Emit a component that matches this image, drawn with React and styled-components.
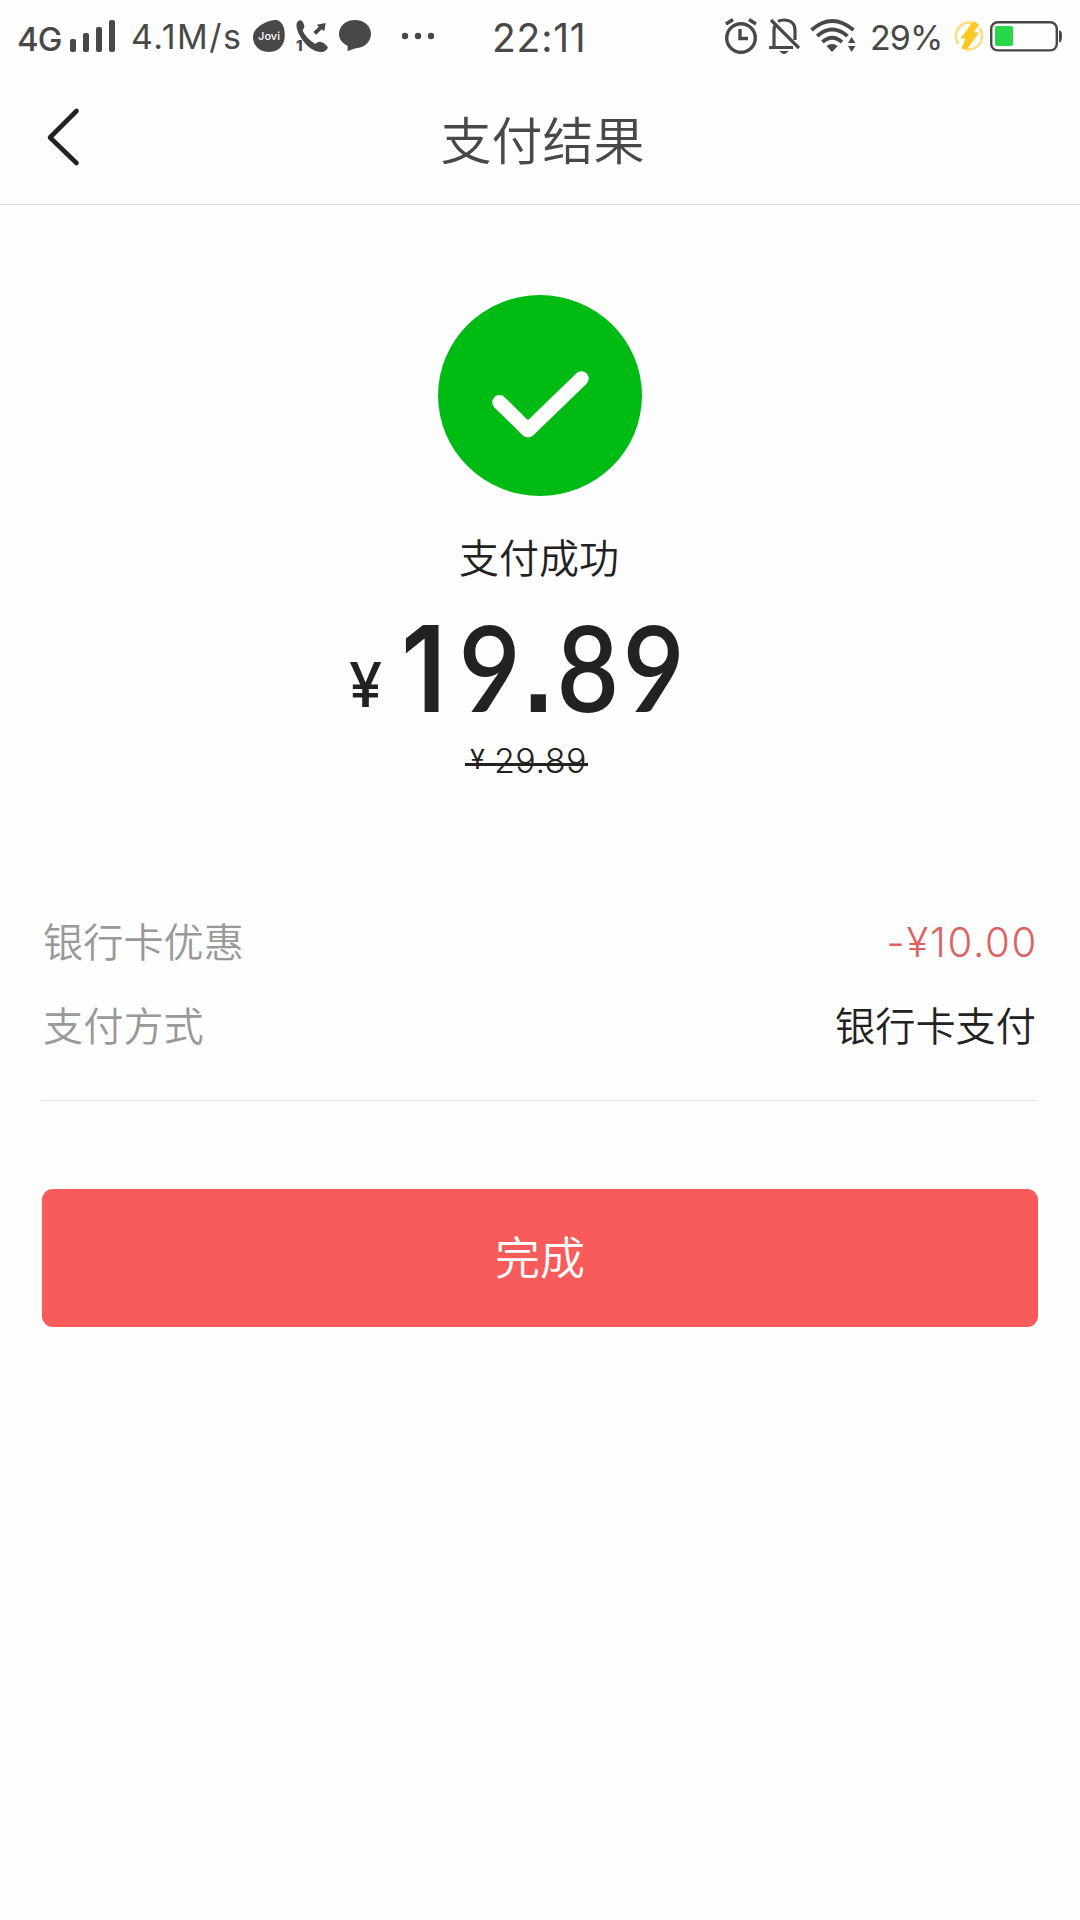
import React from 'react';
import styled, { createGlobalStyle } from 'styled-components';

const details = [
  { label: '银行卡优惠', value: '-¥10.00', discount: true },
  { label: '支付方式', value: '银行卡支付' },
];

const digitFonts = { 1: 'Inter', '.': "'Liberation Sans'" };

function App() {
  return (
    <Screen>
      <GlobalStyle />
      <StatusBar>
        <Network>4G</Network>
        <Signal viewBox="0 0 46 32">
          <rect x="0" y="19" width="6" height="13" rx="2" />
          <rect x="13" y="13" width="6" height="19" rx="2" />
          <rect x="26" y="7" width="6" height="25" rx="2" />
          <rect x="39" y="0" width="6" height="32" rx="2" />
        </Signal>
        <Speed>4.1M/s</Speed>
        <Jovi>
          <svg viewBox="0 0 32 32">
            <path d="M21 0C26 -.6 30 3 31.300 10C33 20 30 31.600 16 32C6 32 0 25 0 17C0 9 10 1.500 21 0Z" />
          </svg>
          <span>Jovi</span>
        </Jovi>
        <MissedCall>
          <svg viewBox="0 0 32 32">
            <path d="M1.200 2.200C2.500 .5 4.500 -.2 5.700 .8C7.700 3 8.700 5.500 8.300 7.200C7.700 9 6.300 9.500 6.900 11C9 16 13 20 18.500 23.500C20 24.400 20.800 22.200 23 21.800C26 21.400 29.500 24 31.700 27C32.200 29 28.500 32 25 32C18 31.800 10.500 26.500 5.500 18.500C2 13 -1 6 1.200 2.200Z" />
            <path d="M29.700 3L28.300 11.300L25.800 9.200L20.200 14.700L17.300 11.900L22.800 6.700L20.700 4.700Z" />
          </svg>
          <span>1</span>
        </MissedCall>
        <Bubble viewBox="0 0 32 32">
          <path d="M16 0C25 0 32 6 32 14C32 22 25 28 17 28.200C14 28.500 12 30 8.500 31.300L8.700 26C3 23 0 19 0 14C0 6 7 0 16 0Z" />
        </Bubble>
        <Dots viewBox="0 0 34 8">
          <circle cx="4" cy="4" r="3.200" />
          <circle cx="17" cy="4" r="3.200" />
          <circle cx="30" cy="4" r="3.200" />
        </Dots>
        <Clock>22:11</Clock>
        <Alarm viewBox="0 0 34 36">
          <circle cx="17" cy="20" r="14.300" />
          <path d="M16 11V20.500H24M2 6L9 1.500M32 6L25 1.500" />
        </Alarm>
        <Bell viewBox="0 0 31 36">
          <path d="M5 29V12Q5 9 6.500 7M26 22V12C26 5 21 2 15 2C12.500 2 10.500 2.500 9 3.500M0 29.500H24M2 2L30 30" />
          <path className="fill" d="M10.500 33H19.500C18 35 16.500 36 15 36C13.500 36 12 35 10.500 33Z" />
        </Bell>
        <Wifi viewBox="0 0 46 33">
          <path d="M1.500 11Q22 -7 43.500 11M7.200 17Q22 4 37.500 17M12.500 23Q22 14.500 32 23" />
          <path className="fill" d="M16.500 27Q22 23 27.800 27L22 33ZM41.500 18L45.500 24H38ZM38 27H45.500L41.500 33Z" />
        </Wifi>
        <Percent>29%</Percent>
        <Bolt viewBox="0 0 32 32">
          <path className="ring" d="M19 2.800A13.500 13.500 0 0 0 5.500 24M13 29.200A13.500 13.500 0 0 0 26.500 8" />
          <path d="M20.500 1L26 4.500L20.800 12.500H26L13.500 30L8.500 28.500L12.500 18.500H7.500Z" />
        </Bolt>
        <Battery viewBox="0 0 73 31">
          <rect className="case" x="1.200" y="1.200" width="65.600" height="28.200" rx="6.500" />
          <rect className="level" x="5" y="5" width="18" height="20" rx="2" />
          <path d="M69 9.500C71 9.500 72 11 72 15.300C72 19.500 71 21.500 69 21.500Z" />
        </Battery>
      </StatusBar>

      <Header>
        <BackButton aria-label="返回">
          <svg viewBox="0 0 34 60">
            <path d="M30.500 4L4 30.500L30.500 56" />
          </svg>
        </BackButton>
        <Title>支付结果</Title>
      </Header>

      <Result>
        <SuccessIcon viewBox="0 0 204 202">
          <ellipse cx="102" cy="100.500" rx="102" ry="100.500" />
          <path d="M61.500 107.300L90 135.300L143.500 83.500" />
        </SuccessIcon>
        <Message>支付成功</Message>
        <Price>
          <Currency>¥</Currency>
          <Amount>
            {[...'19.89'].map((char, i) => (
              <Digit key={i} $font={digitFonts[char]} $narrow={char === '.'}>
                {char}
              </Digit>
            ))}
          </Amount>
        </Price>
        <OldPrice>
          <small>¥</small>
          <span>29.89</span>
        </OldPrice>
      </Result>

      <Details>
        {details.map((item) => (
          <Row key={item.label}>
            <Label>{item.label}</Label>
            <Value $discount={item.discount}>{item.value}</Value>
          </Row>
        ))}
      </Details>

      <DoneButton>完成</DoneButton>
    </Screen>
  );
}

export default App;

const GlobalStyle = createGlobalStyle`
  body {
    margin: 0;
    background: #fefefe;
  }

  * {
    box-sizing: border-box;
  }

  button {
    border: none;
    padding: 0;
    background: none;
    font-family: inherit;
  }
`;

const Screen = styled.div`
  width: 1080px;
  height: 1920px;
  overflow: hidden;
  background: #fefefe;
  color: #222;
  font-family: Inter, 'Noto Sans CJK SC DemiLight', 'Noto Sans CJK SC', sans-serif;
`;

const StatusBar = styled.div`
  display: flex;
  align-items: flex-start;
  height: 74px;
  padding-left: 17px;
  color: #484848;
  fill: #484848;
  white-space: nowrap;

  svg {
    display: block;
    flex: none;
  }
`;

const Network = styled.div`
  width: 53px;
  margin-top: 19px;
  font-size: 33px;
  line-height: 40px;
  font-weight: 500;
  letter-spacing: -1px;
`;

const Signal = styled.svg`
  width: 46px;
  height: 32px;
  margin-top: 20px;
`;

const Speed = styled.div`
  width: 122px;
  margin: 17px 0 0 15px;
  font-size: 34px;
  line-height: 40px;
  letter-spacing: 1.5px;
`;

const Jovi = styled.div`
  display: grid;
  width: 32px;
  height: 32px;
  margin-top: 20px;

  svg,
  span {
    grid-area: 1 / 1;
  }

  span {
    align-self: center;
    justify-self: center;
    color: #fff;
    font-size: 11px;
    font-weight: 500;
    line-height: 12px;
  }
`;

const MissedCall = styled.div`
  display: grid;
  width: 32px;
  height: 32px;
  margin: 20px 0 0 11px;

  svg,
  span {
    grid-area: 1 / 1;
  }

  span {
    align-self: end;
    font-size: 15px;
    font-weight: 800;
    line-height: 13px;
  }
`;

const Bubble = styled.svg`
  width: 32px;
  height: 32px;
  margin: 20px 0 0 11px;
`;

const Dots = styled.svg`
  width: 34px;
  height: 8px;
  margin: 32px 0 0 30px;
`;

const Clock = styled.div`
  width: 100px;
  margin: 15px 0 0 57px;
  font-size: 39px;
  line-height: 46px;
  letter-spacing: 0.8px;
`;

const Alarm = styled.svg`
  width: 34px;
  height: 36px;
  margin: 18px 0 0 132px;
  fill: none;
  stroke: #484848;
  stroke-width: 3.4px;
`;

const Bell = styled.svg`
  width: 31px;
  height: 36px;
  margin: 18px 0 0 11px;
  fill: none;
  stroke: #484848;
  stroke-width: 3.2px;

  .fill {
    fill: #484848;
    stroke: none;
  }
`;

const Wifi = styled.svg`
  width: 46px;
  height: 33px;
  margin: 19px 0 0 10px;
  fill: none;
  stroke: #484848;
  stroke-width: 3.8px;

  .fill {
    fill: #484848;
    stroke: none;
  }
`;

const Percent = styled.div`
  width: 83px;
  margin: 18px 0 0 14px;
  font-size: 34px;
  line-height: 40px;
  letter-spacing: -0.9px;
`;

const Bolt = styled.svg`
  width: 32px;
  height: 32px;
  margin-top: 20px;
  fill: #fac81e;

  .ring {
    fill: none;
    stroke: #fbe08a;
    stroke-width: 3px;
  }
`;

const Battery = styled.svg`
  width: 73px;
  height: 31px;
  margin: 21px 0 0 5px;

  .case {
    fill: none;
    stroke: #484848;
    stroke-width: 2.4px;
  }

  .level {
    fill: #28d848;
  }
`;

const Header = styled.header`
  display: grid;
  grid-template-columns: 130px 1fr 130px;
  align-items: center;
  height: 131px;
  border-bottom: 1px solid #d8d8d8;
`;

const BackButton = styled.button`
  width: 34px;
  height: 60px;
  margin: -5px 0 0 46px;

  svg {
    display: block;
    fill: none;
    stroke: #222;
    stroke-width: 4.6px;
    stroke-linecap: round;
    stroke-linejoin: round;
  }
`;

const Title = styled.h1`
  margin: 6px -5px 0 0;
  color: #484848;
  font-size: 51px;
  font-weight: 350;
  line-height: 70px;
  text-align: center;
`;

const Result = styled.section`
  display: flex;
  flex-direction: column;
  align-items: center;
  height: 693px;
  padding-top: 90px;
`;

const SuccessIcon = styled.svg`
  display: block;
  width: 204px;
  height: 202px;

  ellipse {
    fill: #00bb14;
  }

  path {
    fill: none;
    stroke: #fff;
    stroke-width: 14.5px;
    stroke-linecap: round;
    stroke-linejoin: round;
  }
`;

const Message = styled.p`
  margin: 32px 2px 0 0;
  font-size: 40px;
  font-weight: 350;
  line-height: 60px;
`;

const Price = styled.div`
  display: flex;
  align-self: stretch;
  height: 140px;
  margin-top: 7px;
  padding-left: 349px;
  line-height: 140px;
`;

const Currency = styled.span`
  width: 42px;
  padding-top: 19px;
  font-size: 62px;
  font-weight: 500;
  transform: scaleX(0.96);
  transform-origin: left;
`;

const Amount = styled.strong`
  display: flex;
  align-items: baseline;
  font-size: 119px;
  font-weight: 600;
`;

const Digit = styled.span`
  display: flex;
  justify-content: center;
  width: ${(props) => (props.$narrow ? '33px' : '65.5px')};
  font-family: ${(props) => props.$font || 'Lato'}, sans-serif;
  transform: scaleX(0.9);
`;

const OldPrice = styled.div`
  display: flex;
  width: 123px;
  height: 40px;
  margin: 5px 27px 0 0;
  padding-left: 5px;
  background: linear-gradient(#222, #222) 0 22px / 100% 3px no-repeat;
  font-weight: 300;
  line-height: 40px;
  white-space: nowrap;

  small {
    width: 24px;
    font-size: 27px;
    font-weight: 400;
    line-height: 37px;
  }

  span {
    font-size: 34px;
    letter-spacing: 0.5px;
  }
`;

const Details = styled.section`
  height: 203px;
  margin: 0 44px 0 42px;
  padding-top: 15px;
  border-bottom: 1px solid #e2e2e2;
`;

const Row = styled.div`
  display: flex;
  justify-content: space-between;
  height: 84px;
  font-size: 40.2px;
  font-weight: 350;
  line-height: 60px;
`;

const Label = styled.span`
  margin-left: 1px;
  color: #999;
`;

const Value = styled.span`
  margin-right: ${(props) => (props.$discount ? '-2px' : '0')};
  color: ${(props) => (props.$discount ? '#df6262' : '#222')};
  letter-spacing: ${(props) => (props.$discount ? '1.7px' : '0')};
`;

const DoneButton = styled.button`
  display: block;
  width: 996px;
  height: 138px;
  margin: 88px 0 0 42px;
  border-radius: 11px;
  background: #f95b5b;
  color: #fff;
  font-size: 45px;
  font-weight: 350;
  line-height: 140px;
`;
